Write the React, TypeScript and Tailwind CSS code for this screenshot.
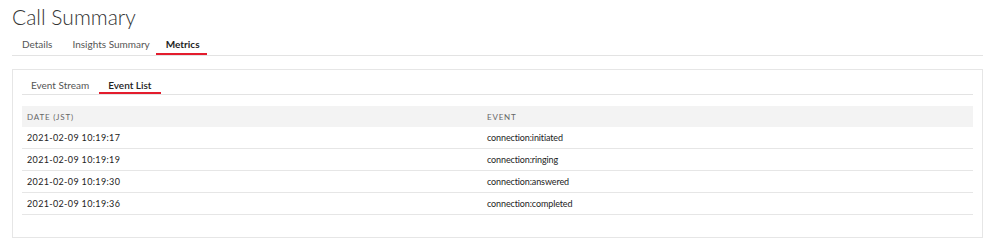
const events = [
  { date: '2021-02-09 10:19:17', event: 'connection:initiated' },
  { date: '2021-02-09 10:19:19', event: 'connection:ringing' },
  { date: '2021-02-09 10:19:30', event: 'connection:answered' },
  { date: '2021-02-09 10:19:36', event: 'connection:completed' },
];

export default function App() {
  const topTabs = [
    { label: 'Details', pad: 'pl-[10px] pr-[10px]' },
    { label: 'Insights Summary', pad: 'pl-[10px] pr-[6px]' },
    { label: 'Metrics', pad: 'pl-[10px] pr-[7px]' },
  ];
  const subTabs = ['Event Stream', 'Event List'];

  return (
    <div className="w-[990px] h-[246px] bg-white pl-3 pr-[7px] font-['Lato',sans-serif] text-[#222]">
      {/* Title */}
      <h1 className="pt-[3px] text-[21px] font-light leading-[28px] text-[#333]">Call Summary</h1>

      {/* Top tabs */}
      <div className="mt-[5px] flex border-b border-[#e3e3e3]">
        {topTabs.map(tab => (
          <div
            key={tab.label}
            className={`${tab.pad} h-[19px] text-[10px] leading-[16px] border-b-2 ${
              tab.label === 'Metrics' ? 'border-[#e31c2d] font-bold text-[#222]' : 'border-transparent text-[#555]'
            }`}
          >
            {tab.label}
          </div>
        ))}
      </div>

      {/* Card */}
      <div className="mt-[13px] border border-[#e6e6e6] px-[9px] pt-[8px] pb-[22px]">
        <div className="flex border-b border-[#e3e3e3]">
          {subTabs.map(tab => (
            <div
              key={tab}
              className={`h-[16px] text-[10px] leading-[14px] border-b-2 ${
                tab === 'Event List' ? 'border-[#e31c2d] font-semibold text-[#222] px-[9px]' : 'border-transparent text-[#555] pl-[9px] pr-[10px]'
              }`}
            >
              {tab}
            </div>
          ))}
        </div>

        <div className="mt-[11px]">
          <div className="grid grid-cols-[465px_1fr] h-[21px] items-center bg-[#f3f3f3] text-[8px] tracking-[0.1em] text-[#666]">
            <div className="pl-[5px]">DATE (JST)</div>
            <div>EVENT</div>
          </div>
          {events.map(row => (
            <div
              key={row.date}
              className="grid grid-cols-[465px_1fr] h-[22px] items-center border-b border-[#e6e6e6] text-[9px] text-[#222]"
            >
              <div className="pl-[5px] tracking-[0.35px]">{row.date}</div>
              <div className="tracking-[-0.12px]">{row.event}</div>
            </div>
          ))}
        </div>
      </div>
    </div>
  );
}
